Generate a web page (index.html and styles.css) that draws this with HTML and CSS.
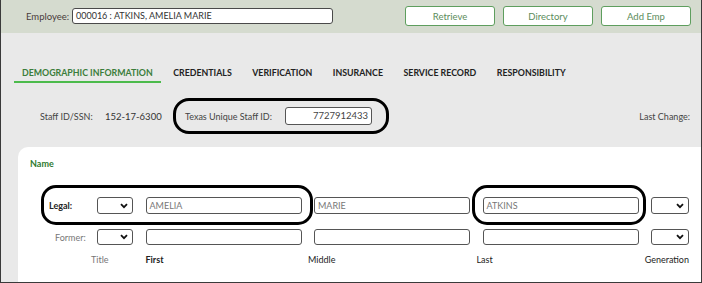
FILE: index.html
```html
<!DOCTYPE html>
<html>
<head>
<meta charset="utf-8">
<link rel="stylesheet" href="styles.css">
</head>
<body>
<div class="frame">
  <div class="topbar">
    <span class="emp-label">Employee:</span>
    <div class="emp-input">000016 : ATKINS, AMELIA MARIE</div>
    <div class="btns">
      <button class="btn">Retrieve</button>
      <button class="btn">Directory</button>
      <button class="btn">Add Emp</button>
    </div>
  </div>
  <div class="main">
    <nav class="tabs">
      <span class="tab active">DEMOGRAPHIC INFORMATION</span>
      <span class="tab">CREDENTIALS</span>
      <span class="tab">VERIFICATION</span>
      <span class="tab">INSURANCE</span>
      <span class="tab">SERVICE RECORD</span>
      <span class="tab">RESPONSIBILITY</span>
    </nav>
    <div class="staff-row">
      <span class="staff-label">Staff ID/SSN:</span>
      <span class="staff-value">152-17-6300</span>
      <div class="oval-group">
        <span class="tsid-label">Texas Unique Staff ID:</span>
        <div class="tsid-input">7727912433</div>
      </div>
      <span class="last-change">Last Change:</span>
    </div>
    <div class="card">
      <div class="card-title">Name</div>
      <div class="name-row legal-row">
        <span class="row-label legal">Legal:</span>
        <div class="select"><svg width="8" height="6" viewBox="0 0 8 6"><path d="M1 1.2 L4 4.2 L7 1.2" fill="none" stroke="#111" stroke-width="1.8"/></svg></div>
        <div class="field">AMELIA</div>
        <div class="field">MARIE</div>
        <div class="field">ATKINS</div>
        <div class="select"><svg width="8" height="6" viewBox="0 0 8 6"><path d="M1 1.2 L4 4.2 L7 1.2" fill="none" stroke="#111" stroke-width="1.8"/></svg></div>
      </div>
      <div class="name-row former-row">
        <span class="row-label former">Former:</span>
        <div class="select"><svg width="8" height="6" viewBox="0 0 8 6"><path d="M1 1.2 L4 4.2 L7 1.2" fill="none" stroke="#111" stroke-width="1.8"/></svg></div>
        <div class="field"></div>
        <div class="field"></div>
        <div class="field"></div>
        <div class="select"><svg width="8" height="6" viewBox="0 0 8 6"><path d="M1 1.2 L4 4.2 L7 1.2" fill="none" stroke="#111" stroke-width="1.8"/></svg></div>
      </div>
      <div class="name-row caption-row">
        <span></span>
        <span class="cap cap-title">Title</span>
        <span class="cap cap-first">First</span>
        <span class="cap cap-shift">Middle</span>
        <span class="cap cap-shift">Last</span>
        <span class="cap cap-gen">Generation</span>
      </div>
      <div class="annot annot-legal"></div>
      <div class="annot annot-last"></div>
    </div>
  </div>
</div>
</body>
</html>
```
FILE: styles.css
```css
* { box-sizing: border-box; }
html, body { margin: 0; padding: 0; }
body { font-family: Lato, "Open Sans", sans-serif; background: #fff; }

.frame {
  width: 702px;
  height: 283px;
  border-left: 1px solid #3a3a3a;
  border-right: 1px solid #3a3a3a;
  border-bottom: 1px solid #3a3a3a;
  background: #e9e9e9;
  overflow: hidden;
  display: flex;
  flex-direction: column;
}

.topbar {
  height: 33px;
  flex: none;
  background: #d5dbcf;
  display: flex;
  align-items: center;
  padding-left: 25px;
  padding-right: 10px;
}
.emp-label {
  width: 46px;
  font-size: 9.5px;
  color: #4a3b3b;
}
.emp-input {
  width: 261px;
  height: 16px;
  margin-top: -1px;
  background: #fff;
  border: 1px solid #4a4a4a;
  border-radius: 3px;
  font-size: 9px;
  color: #333;
  padding-left: 3px;
  line-height: 14px;
}
.btns {
  margin-left: auto;
  display: flex;
  gap: 8px;
}
.btn {
  width: 90px;
  height: 20px;
  margin-top: -1px;
  background: #fff;
  border: 1px solid #5e9e5e;
  border-radius: 3px;
  font-family: Lato, "Open Sans", sans-serif;
  font-size: 9.5px;
  color: #5b8c5b;
  padding: 0;
}

.main {
  flex: 1;
  display: flex;
  flex-direction: column;
}
.tabs {
  margin-top: 33px;
  padding-left: 13px;
  display: flex;
  gap: 4.5px;
}
.tab {
  font-size: 8.8px;
  font-weight: 700;
  color: #222;
  line-height: 13px;
  padding: 0 8px 2px;
  border-bottom: 2px solid transparent;
}
.tab.active {
  color: #3b7d3b;
  border-bottom-color: #4cbb4c;
}

.staff-row {
  margin-top: 15px;
  padding-left: 39px;
  padding-right: 11px;
  display: flex;
  align-items: center;
  font-size: 9px;
  color: #444;
}
.staff-label { width: 65px; }
.staff-value { width: 68px; font-size: 9.5px; color: #333; }
.oval-group {
  display: flex;
  align-items: center;
  border: 3px solid #000;
  border-radius: 16px;
  padding: 6px 14px 6px 9px;
}
.tsid-label { width: 100px; }
.tsid-input {
  width: 87px;
  height: 18px;
  background: #fff;
  border: 1px solid #555;
  border-radius: 3px;
  text-align: right;
  padding-right: 3px;
  line-height: 16px;
  font-size: 9.5px;
  color: #444;
}
.last-change { margin-left: auto; }

.card {
  position: relative;
  flex: 1;
  margin-top: 13px;
  margin-left: 17px;
  background: #fff;
  border-radius: 10px 0 0 0;
  padding-top: 11px;
}
.card-title {
  padding-left: 12px;
  font-size: 9px;
  font-weight: 700;
  color: #2f7a2f;
  line-height: 12px;
}
.name-row {
  display: grid;
  grid-template-columns: 66.5px 36px 156px 156px 156px 38px;
  column-gap: 12.5px;
  align-items: center;
}
.legal-row { margin-top: 27px; height: 17px; }
.former-row { margin-top: 15px; height: 16px; }
.caption-row { margin-top: 8px; height: 12px; }

.row-label { font-size: 9px; }
.row-label.legal { padding-left: 31px; font-weight: 700; color: #222; }
.row-label.former { padding-left: 37px; color: #777; }

.select {
  height: 100%;
  border: 1px solid #555;
  border-radius: 3px;
  background: #fff;
  display: flex;
  align-items: center;
  justify-content: flex-end;
  padding-right: 4px;
}
.field {
  height: 100%;
  border: 1px solid #555;
  border-radius: 3px;
  background: #fff;
  font-size: 9px;
  color: #777;
  padding-left: 3px;
  display: flex;
  align-items: center;
}

.cap { font-size: 9px; color: #222; white-space: nowrap; }
.cap-title { margin-left: -6px; color: #777; }
.cap-first { font-weight: 700; }
.cap-shift { margin-left: -6px; }
.cap-gen { justify-self: end; }

.annot {
  position: absolute;
  top: 38px;
  height: 40px;
  border: 3px solid #000;
  border-radius: 15px;
}
.annot-legal { left: 23px; width: 272px; }
.annot-last { left: 454px; width: 174px; }
```
